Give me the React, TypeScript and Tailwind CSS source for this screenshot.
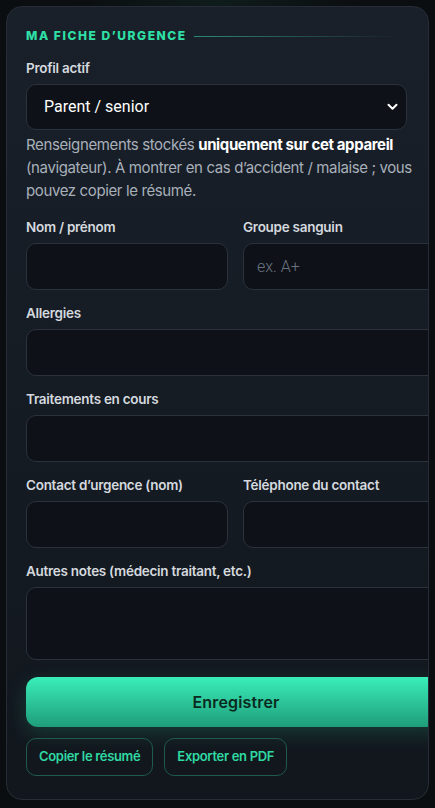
import React from 'react';

const Label: React.FC<{ children: React.ReactNode }> = ({ children }) => (
  <label className="block text-[13.5px] font-semibold tracking-[-0.02em] text-[#d4d9df] mb-[7px] leading-[18px]">{children}</label>
);

const inputCls =
  'block w-full h-[47px] rounded-[10px] border border-[#2b323b] bg-[#0e1218] px-[13px] text-[16px] text-white placeholder:text-[#6b7280] outline-none font-[Roboto,sans-serif] font-light';

const App: React.FC = () => {
  return (
    <div className="min-h-[808px] bg-[radial-gradient(ellipse_at_top,#0f1c1c_0%,#0b0e11_45%)] bg-[#0b0e11] p-[6px] font-[Inter,sans-serif]">
      <section className="w-[423px] rounded-[16px] border border-[#262d36] bg-gradient-to-b from-[#19202a] to-[#12171d] overflow-hidden pl-[19px] pt-[20px] pb-[23px]">
        <div className="w-[420px]">
          <div className="flex items-center gap-[7px] h-[18px] mb-[14px]">
            <h2 className="text-[12px] font-extrabold uppercase tracking-[0.13em] text-[#2fe0a6]">Ma fiche d’urgence</h2>
            <div className="h-px w-[206px] bg-gradient-to-r from-[#2a8a72] via-[#24524a] to-transparent" />
          </div>

          <Label>Profil actif</Label>
          <div className="relative w-[381px]">
            <select className="block appearance-none w-full h-[46px] rounded-[10px] border border-[#2b323b] bg-[#0e1218] pl-[17px] pr-[36px] text-[16px] text-white outline-none font-[Roboto,sans-serif]">
              <option>Parent / senior</option>
            </select>
            <svg className="pointer-events-none absolute right-[9px] top-[19px]" width="11" height="8" viewBox="0 0 11 8" fill="none">
              <path d="M1.5 1.8 5.5 5.8 9.5 1.8" stroke="#ffffff" strokeWidth="2" strokeLinecap="round" strokeLinejoin="round" />
            </svg>
          </div>

          <p className="mt-[3px] w-[392px] text-[15px] leading-[23px] text-[#a8b0ba] tracking-[-0.025em]">
            Renseignements stockés <strong className="font-bold text-white">uniquement sur cet appareil</strong> (navigateur). À montrer en cas d’accident / malaise ; vous pouvez copier le résumé.
          </p>

          <div className="mt-[16px] grid grid-cols-[202px_202px] gap-x-[15px]">
            <div>
              <Label>Nom / prénom</Label>
              <input className={inputCls} />
            </div>
            <div>
              <Label>Groupe sanguin</Label>
              <input className={inputCls} placeholder="ex. A+" />
            </div>
          </div>

          <div className="mt-[14px]">
            <Label>Allergies</Label>
            <input className={inputCls} />
          </div>

          <div className="mt-[14px]">
            <Label>Traitements en cours</Label>
            <input className={inputCls} />
          </div>

          <div className="mt-[14px] grid grid-cols-[202px_202px] gap-x-[15px]">
            <div>
              <Label>Contact d’urgence (nom)</Label>
              <input className={inputCls} />
            </div>
            <div>
              <Label>Téléphone du contact</Label>
              <input className={inputCls} />
            </div>
          </div>

          <div className="mt-[14px]">
            <Label>Autres notes (médecin traitant, etc.)</Label>
            <textarea className="block w-full h-[73px] resize-none rounded-[10px] border border-[#2b323b] bg-[#0e1218] px-[13px] py-[10px] text-[15px] text-white outline-none" />
          </div>

          <button className="block mt-[17px] w-full h-[50px] rounded-[12px] bg-gradient-to-b from-[#3aefb9] to-[#1f9d7b] text-[16px] font-semibold tracking-[0.01em] text-[#0a2a20] shadow-[0_6px_20px_rgba(46,224,166,0.18)]">
            Enregistrer
          </button>

          <div className="mt-[11px] flex gap-[11px]">
            <button className="h-[38px] px-[12px] rounded-[10px] border border-[#1f5a4a] bg-transparent text-[13px] font-semibold tracking-[-0.025em] text-[#2fd9a2]">
              Copier le résumé
            </button>
            <button className="h-[38px] px-[12px] rounded-[10px] border border-[#1f5a4a] bg-transparent text-[13px] font-semibold tracking-[-0.025em] text-[#2fd9a2]">
              Exporter en PDF
            </button>
          </div>
        </div>
      </section>
    </div>
  );
};

export default App;
